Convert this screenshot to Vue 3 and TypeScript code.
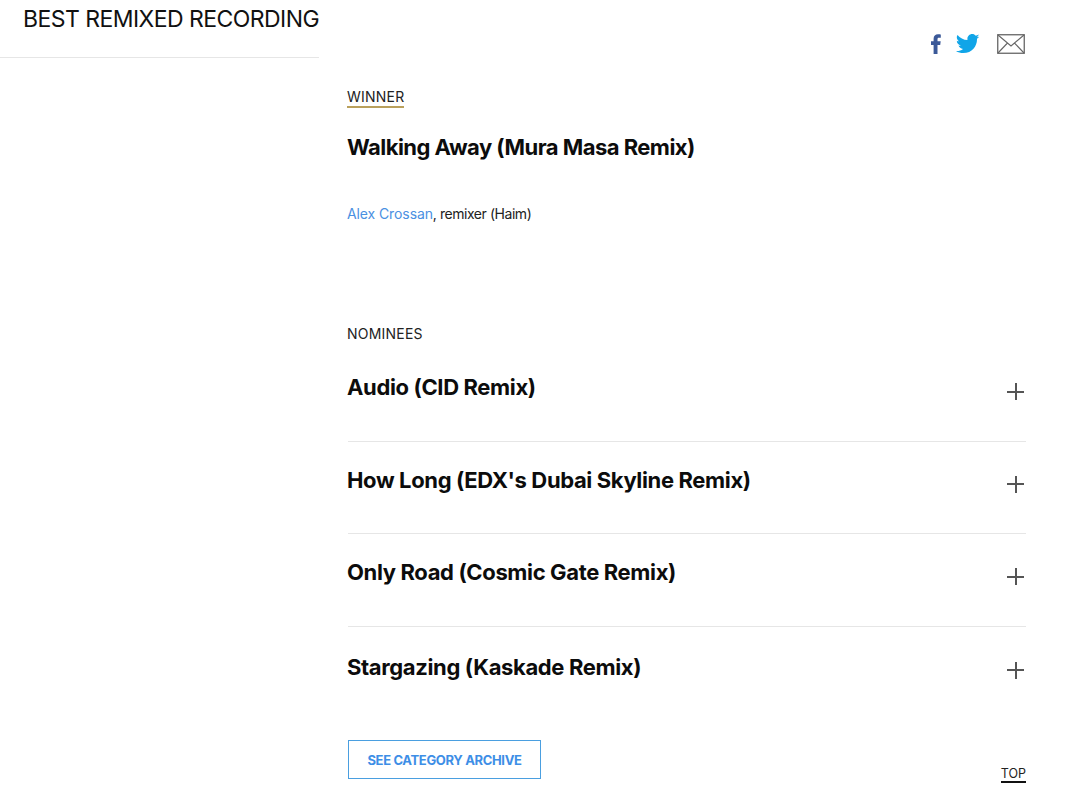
<template>
  <div class="page">
    <aside class="side">
      <h1 class="cat-title">BEST REMIXED RECORDING</h1>
    </aside>
    <main class="content">
      <div class="share">
        <svg class="ic-fb" width="10" height="20" viewBox="0 0 10 20">
          <path d="M2.600 20V11H0V7.200H2.600V4.800C2.600 1.700 4.400 0.200 7 0.200C8.300 0.200 9.400 0.300 9.800 0.400V3.700H8C6.700 3.700 6.500 4.300 6.500 5.300V7.200H9.700L9.200 11H6.500V20Z" fill="#3b5998" />
        </svg>
        <svg class="ic-tw" width="24" height="20" viewBox="0 0 24 20">
          <path d="M23.5 2.4c-.9.4-1.8.7-2.8.8 1-.6 1.8-1.5 2.1-2.7-.9.6-2 1-3.100 1.200C18.900.7 17.600.100 16.200.100c-2.700 0-4.800 2.200-4.800 4.800 0 .4 0 .8.100 1.100C7.500 5.800 3.900 3.900 1.500.9 1.100 1.600.800 2.400.800 3.300c0 1.700.9 3.200 2.200 4-.8 0-1.500-.2-2.200-.6v.1c0 2.300 1.700 4.300 3.900 4.700-.4.100-.8.200-1.300.2-.3 0-.6 0-.9-.1.600 1.900 2.400 3.300 4.500 3.300-1.700 1.300-3.700 2.100-6 2.100-.4 0-.8 0-1.100-.1 2.100 1.400 4.700 2.200 7.400 2.200 8.900 0 13.700-7.300 13.700-13.700v-.6c.9-.7 1.700-1.500 2.300-2.400z" fill="#10a5e8" />
        </svg>
        <svg class="ic-mail" width="28" height="20" viewBox="0 0 28 20">
          <rect x="0.750" y="0.750" width="26.500" height="18.500" fill="none" stroke="#666" stroke-width="1.300" />
          <path d="M1 1L14 12L27 1M1 19L10.500 9M27 19L17.500 9" fill="none" stroke="#666" stroke-width="1.100" />
        </svg>
      </div>

      <section class="winner">
        <span class="label winner-label">WINNER</span>
        <h2 class="rec-title">Walking Away (Mura Masa Remix)</h2>
        <p class="credit"><a class="credit-link">Alex Crossan</a>, remixer (Haim)</p>
      </section>

      <section class="nominees">
        <span class="label">NOMINEES</span>
        <div class="nominee-list">
          <div v-for="item in nominees" :key="item" class="nominee">
            <h2 class="rec-title">{{ item }}</h2>
            <span class="plus"></span>
          </div>
        </div>
      </section>

      <div class="footer-row">
        <a class="archive">SEE CATEGORY ARCHIVE</a>
        <a class="top">TOP</a>
      </div>
    </main>
  </div>
</template>

<script setup lang="ts">
const nominees: string[] = [
  'Audio (CID Remix)',
  "How Long (EDX's Dubai Skyline Remix)",
  'Only Road (Cosmic Gate Remix)',
  'Stargazing (Kaskade Remix)'
]
</script>

<style>
html,
body {
  margin: 0;
  background: #fff;
  overflow: hidden;
}
</style>

<style scoped>
.page {
  display: flex;
  width: 1080px;
  height: 798px;
  overflow: hidden;
  font-family: Inter, "Liberation Sans", sans-serif;
  color: #111;
}

.side {
  width: 319px;
  flex: none;
}

.cat-title {
  margin: 0;
  height: 58px;
  box-sizing: border-box;
  padding: 5px 0 0 23px;
  border-bottom: 1px solid #e6e6e6;
  font-size: 23px;
  line-height: 28px;
  font-weight: 400;
  letter-spacing: -0.55px;
  white-space: nowrap;
}

.content {
  width: 679px;
  margin-left: 28px;
  flex: none;
}

.share {
  display: flex;
  justify-content: flex-end;
  align-items: center;
  height: 20px;
  padding-top: 34px;
  padding-right: 1px;
}

.ic-fb {
  margin-right: 15px;
}

.ic-tw {
  margin-right: 17px;
}

.label {
  display: inline-block;
  font-size: 14px;
  line-height: 16px;
  letter-spacing: 0.22px;
  color: #222;
}

.winner {
  margin-top: 32px;
}

.winner-label {
  padding-bottom: 1px;
  border-bottom: 2px solid #b9a05c;
}

.rec-title {
  margin: 0;
  font-size: 22px;
  line-height: 30px;
  font-weight: 700;
  letter-spacing: -0.53px;
  color: #0c0c0c;
}

.winner .rec-title {
  margin-top: 24px;
}

.credit {
  margin: 42px 0 0;
  font-size: 14px;
  line-height: 20px;
  letter-spacing: -0.45px;
  color: #222;
}

.credit-link {
  color: #4a90e2;
  letter-spacing: -0.1px;
}

.nominees {
  margin-top: 99px;
}

.nominee-list {
  margin-top: 29px;
}

.nominee {
  display: flex;
  justify-content: space-between;
  align-items: flex-start;
  box-sizing: border-box;
  height: 92.7px;
  margin-left: 1px;
  padding-top: 23px;
  border-bottom: 1px solid #e6e6e6;
}

.nominee:first-child {
  height: 69.6px;
  padding-top: 0;
}

.nominee:last-child {
  border-bottom: none;
  padding-top: 25px;
}

.nominee:last-child .plus {
  margin-top: 10px;
}

.nominee .rec-title {
  margin-left: -1px;
  letter-spacing: -0.36px;
}

.plus {
  width: 17px;
  height: 17px;
  margin-right: 2px;
  margin-top: 11px;
  background:
    linear-gradient(#555, #555) center / 17px 2px no-repeat,
    linear-gradient(#555, #555) center / 2px 17px no-repeat;
}

.footer-row {
  display: flex;
  justify-content: space-between;
  align-items: flex-end;
  margin-top: 20px;
}

.archive {
  box-sizing: border-box;
  width: 193px;
  height: 39px;
  margin-left: 1px;
  padding-top: 2px;
  border: 1px solid #4a9fe0;
  display: flex;
  align-items: center;
  justify-content: center;
  font-size: 13px;
  font-weight: 700;
  letter-spacing: -0.35px;
  color: #3d8ee6;
}

.top {
  font-size: 12.500px;
  line-height: 14px;
  color: #222;
  border-bottom: 2px solid #111;
  margin-bottom: -4px;
}
</style>
